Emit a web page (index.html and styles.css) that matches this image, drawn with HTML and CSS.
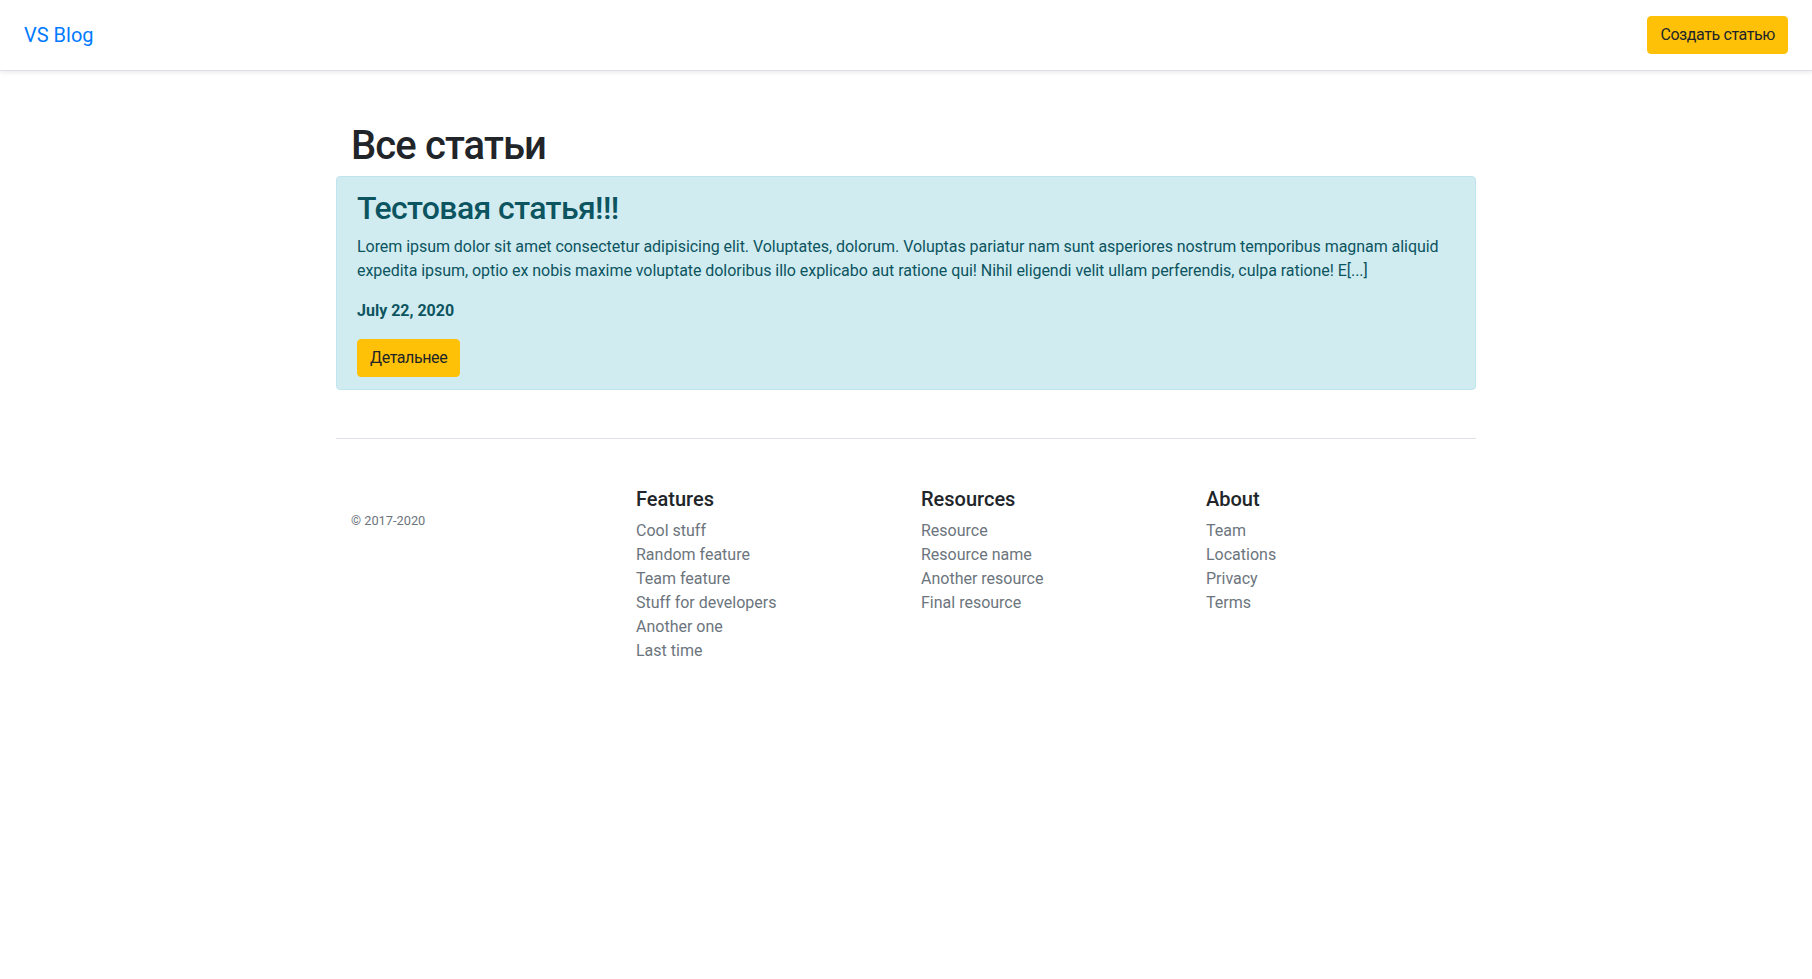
FILE: index.html
```html
<!DOCTYPE html>
<html lang="ru">
<head>
<meta charset="utf-8">
<title>VS Blog</title>
<link rel="stylesheet" href="styles.css">
</head>
<body>
<header class="topbar">
  <a class="brand" href="#">VS Blog</a>
  <a class="btn btn-warning" href="#">Создать статью</a>
</header>
<main class="container">
  <h1 class="page-title">Все статьи</h1>
  <div class="alert">
    <h2 class="alert-title">Тестовая статья!!!</h2>
    <p class="alert-text">Lorem ipsum dolor sit amet consectetur adipisicing elit. Voluptates, dolorum. Voluptas pariatur nam sunt asperiores nostrum temporibus magnam aliquid expedita ipsum, optio ex nobis maxime voluptate doloribus illo explicabo aut ratione qui! Nihil eligendi velit ullam perferendis, culpa ratione! E[...]</p>
    <p class="alert-date">July 22, 2020</p>
    <a class="btn btn-warning" href="#">Детальнее</a>
  </div>
  <footer class="footer">
    <div class="fcol copy-col">
      <small class="copy">© 2017-2020</small>
    </div>
    <div class="fcol">
      <h5>Features</h5>
      <ul>
        <li><a href="#">Cool stuff</a></li>
        <li><a href="#">Random feature</a></li>
        <li><a href="#">Team feature</a></li>
        <li><a href="#">Stuff for developers</a></li>
        <li><a href="#">Another one</a></li>
        <li><a href="#">Last time</a></li>
      </ul>
    </div>
    <div class="fcol">
      <h5>Resources</h5>
      <ul>
        <li><a href="#">Resource</a></li>
        <li><a href="#">Resource name</a></li>
        <li><a href="#">Another resource</a></li>
        <li><a href="#">Final resource</a></li>
      </ul>
    </div>
    <div class="fcol">
      <h5>About</h5>
      <ul>
        <li><a href="#">Team</a></li>
        <li><a href="#">Locations</a></li>
        <li><a href="#">Privacy</a></li>
        <li><a href="#">Terms</a></li>
      </ul>
    </div>
  </footer>
</main>
</body>
</html>
```

FILE: styles.css
```css
* { box-sizing: border-box; }
html, body {
  margin: 0;
  padding: 0;
}
body {
  font-family: Roboto, "Noto Sans", "Liberation Sans", sans-serif;
  font-size: 16px;
  line-height: 1.5;
  color: #212529;
  background: #fff;
}
a { text-decoration: none; }

.topbar {
  display: flex;
  align-items: center;
  justify-content: space-between;
  padding: 16px 24px;
  border-bottom: 1px solid #dee2e6;
  box-shadow: 0 2px 4px rgba(0,0,0,.075);
  background: #fff;
}
.brand {
  color: #007bff;
  font-size: 20px;
  line-height: 1.2;
  font-weight: 400;
}
.btn {
  display: inline-block;
  padding: 6px 12px;
  font-size: 16px;
  line-height: 24px;
  letter-spacing: -0.4px;
  border: 1px solid transparent;
  border-radius: 4px;
  color: #212529;
}
.btn-warning {
  background: #ffc107;
  border-color: #ffc107;
}

.container {
  width: 1140px;
  margin: 0 auto;
  padding-top: 51px;
}
.page-title {
  margin: 0 0 6px;
  padding: 0 15px;
  font-size: 40px;
  line-height: 1.2;
  font-weight: 500;
  letter-spacing: -0.9px;
}
.alert {
  padding: 12px 20px;
  background: #d1ecf1;
  border: 1px solid #bee5eb;
  border-radius: 4px;
  color: #0c5460;
}
.alert-title {
  margin: 0 0 8px;
  font-size: 32px;
  line-height: 1.2;
  font-weight: 500;
  letter-spacing: -0.6px;
}
.alert-text {
  margin: 0 0 16px;
  letter-spacing: -0.05px;
}
.alert-date {
  margin: 0 0 16px;
  font-weight: 700;
}

.footer {
  margin-top: 48px;
  padding-top: 48px;
  border-top: 1px solid #dee2e6;
  display: grid;
  grid-template-columns: repeat(4, 1fr);
}
.fcol {
  padding: 0 15px;
}
.copy-col {
  padding-top: 24px;
}
.copy {
  display: block;
  font-size: 12.8px;
  color: #6c757d;
}
.fcol h5 {
  margin: 0 0 8px;
  font-size: 20px;
  line-height: 1.2;
  font-weight: 500;
}
.fcol ul {
  list-style: none;
  margin: 0 0 16px;
  padding: 0;
}
.fcol li a {
  color: #6c757d;
}
```
